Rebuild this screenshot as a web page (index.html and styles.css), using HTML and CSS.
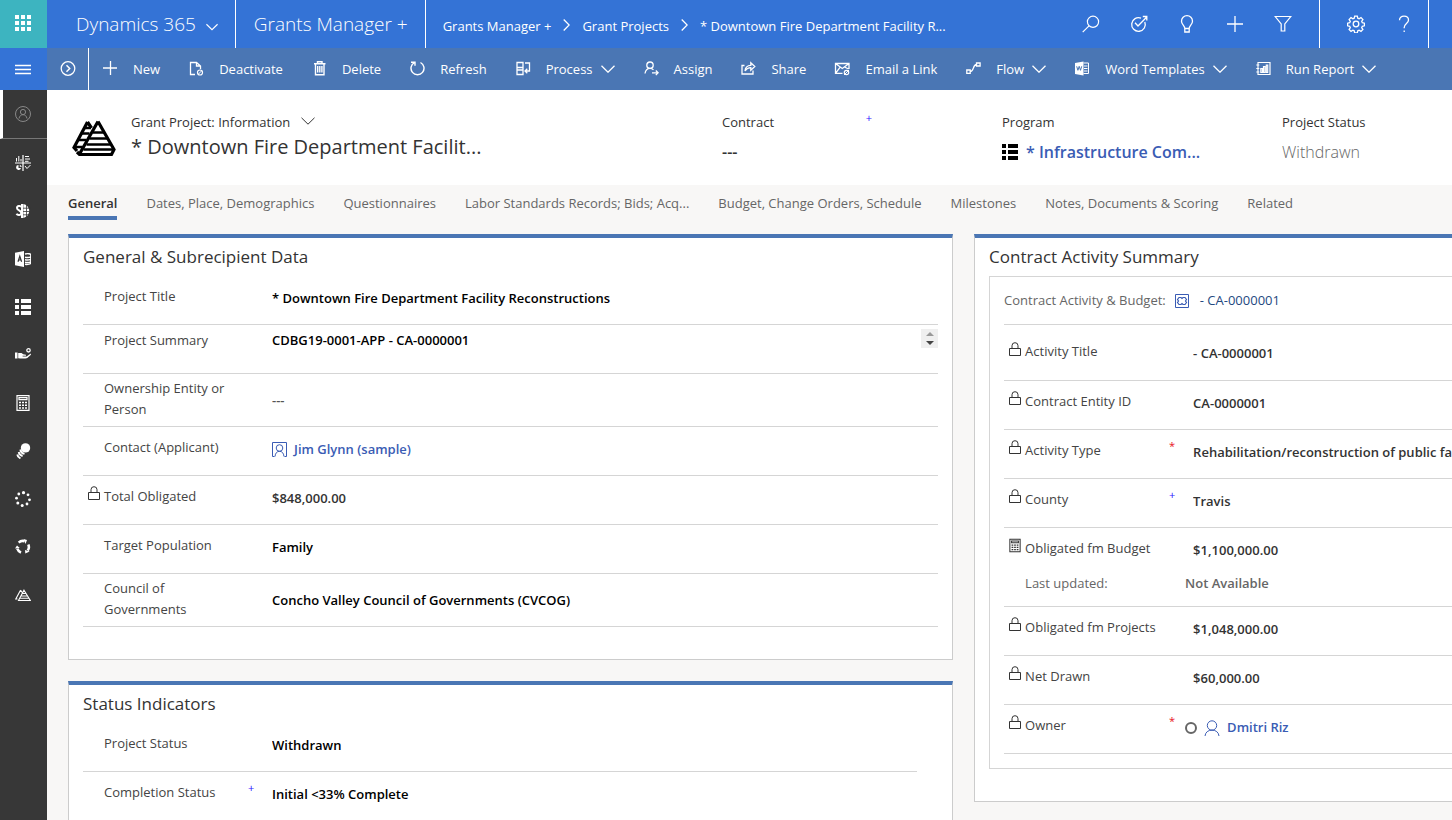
FILE: index.html
```html
<!DOCTYPE html>
<html lang="en">
<head>
<meta charset="utf-8">
<meta name="viewport" content="width=device-width, initial-scale=1">
<title>Grant Project: Downtown Fire Department Facility Reconstructions</title>
<link rel="stylesheet" href="styles.css">
</head>
<body>
<svg class="sprite" aria-hidden="true">
  <symbol id="i-waffle" viewBox="0 0 16 16"><path fill="currentColor" stroke="none" d="M0 0h4v4H0zM6 0h4v4H6zM12 0h4v4h-4zM0 6h4v4H0zM6 6h4v4H6zM12 6h4v4h-4zM0 12h4v4H0zM6 12h4v4H6zM12 12h4v4h-4z"/></symbol>
  <symbol id="i-chevron" viewBox="0 0 14 8"><path d="M.5.8 7 7.2 13.500.8"/></symbol>
  <symbol id="i-next" viewBox="0 0 7 12"><path d="M.7.5 6.200 6 .7 11.500"/></symbol>
  <symbol id="i-menu" viewBox="0 0 16 16"><path d="M0 4.500h16M0 8.500h16M0 12.500h16"/></symbol>
  <symbol id="i-expand" viewBox="0 0 16 16"><circle cx="8" cy="7.500" r="6.800" stroke-width="1.300"/><path d="m6.500 4.300 3.200 3.200-3.200 3.200" stroke-width="1.500"/></symbol>
  <symbol id="i-plus" viewBox="0 0 16 16"><path d="M8 0v16M0 8h16" stroke-width="1.300"/></symbol>
  <symbol id="i-cmdplus" viewBox="0 0 16 16"><path d="M8.500 0v14M1 7h14" stroke-width="1.300"/></symbol>
  <symbol id="i-deactivate" viewBox="0 0 16 16"><path d="M7 13.500H2.500v-12h6L12.500 5v3M8.500 1.500V5h4" stroke-width="1.300"/><circle cx="12" cy="11.500" r="2.500" stroke-width="1.200"/><path d="m10.300 13.200 3.400-3.400"/></symbol>
  <symbol id="i-trash" viewBox="0 0 16 16"><path d="M3 2.800h11.500M6.500 2.500V.8H11v1.700M4.500 3v10.800H13V3M6.700 5v6.500M8.800 5v6.500M10.900 5v6.500" stroke-width="1.400"/></symbol>
  <symbol id="i-refresh" viewBox="0 0 16 16"><path d="M5.500 1.500A6.500 6.500 0 1 0 11.500 1.500M2 1.200h4v3.600" stroke-width="1.400"/></symbol>
  <symbol id="i-process" viewBox="0 0 16 16"><path d="M2 1.500h6v5H2zM2 9h6v4.500H2zM2 6.500V9M8 6.500V9M10 2h4.500v8h-4.300M12.300 7.800 10 10l2.300 2.200" stroke-width="1.300"/></symbol>
  <symbol id="i-assign" viewBox="0 0 16 16"><circle cx="7" cy="4.200" r="3.200" stroke-width="1.300"/><path d="M2 12.500c.5-3.300 2.500-5.200 5-5.200 1.500 0 2.500.5 3.500 1.600M9 11.800h6M12.800 9.500l2.300 2.300-2.300 2.300" stroke-width="1.300"/></symbol>
  <symbol id="i-share" viewBox="0 0 16 16"><path d="M4.500 4.500H2v8.500h11V9.500M5 10c.3-3.500 2.200-5.500 5.800-5.600V1.700l4 3.800-4 3.800V6.700C8 6.700 6.500 7.700 5 10z" stroke-width="1.300"/></symbol>
  <symbol id="i-mail" viewBox="0 0 16 16"><path d="M8.500 12.300H1.500V2.500h13.500V8M1.500 2.500l6.800 5 6.700-5M1.500 12.300l4.500-6M14.500 8l-4-2" stroke-width="1.300"/><circle cx="12.500" cy="11.500" r="2.200" stroke-width="1.200"/><path d="m10 14 5-5"/></symbol>
  <symbol id="i-flow" viewBox="0 0 16 16"><path d="M1.800 9h3.400v3.400H1.800zM11.500 2h3.600v3h-3.600zM5.200 10.700c3.800 0 2.500-7.200 6.300-7.200" stroke-width="1.300"/></symbol>
  <symbol id="i-word" viewBox="0 0 16 16"><path fill="currentColor" stroke="none" d="M9.500.5v14L1 13V2z"/><path d="M9.500 2h5v10.500h-5M10 5h3.500M10 7.500h3.500M10 10h3.500"/><path d="m2.700 5.300 1.200 4 1.300-4 1.300 4 1.200-4" stroke="#4a76b4"/></symbol>
  <symbol id="i-report" viewBox="0 0 16 16"><path d="M3 1.500h12v12H3zM1.300 4h3M1.300 7.500h3M1.300 11h3M5.800 11.500V7.500h1.500v4zM8.500 11.500V5.500H10v6zM11.300 11.500V4h1.400v7.500z" stroke-width="1.200"/></symbol>
  <symbol id="i-search" viewBox="0 0 18 18"><circle cx="11" cy="6.800" r="5.600" stroke-width="1.200"/><path d="m7 10.800-6.300 6.300" stroke-width="1.200"/></symbol>
  <symbol id="i-target" viewBox="0 0 18 18"><path d="M14.800 7A6.800 6.800 0 1 1 11 3.200M5 7.800 8 11l8.500-8.700M12.800 1.500h4v4" stroke-width="1.300"/></symbol>
  <symbol id="i-bulb" viewBox="0 0 18 18"><path d="M6.800 13.500c0-2.800-3.300-4-3.300-7.300a5.500 5.500 0 0 1 11 0c0 3.300-3.300 4.500-3.300 7.300zM6.800 13.500V17h4.400v-3.500" stroke-width="1.300"/></symbol>
  <symbol id="i-filter" viewBox="0 0 18 18"><path d="M1.200 1.500h15.600L10.800 9v7H7.200V9z" stroke-width="1.200"/></symbol>
  <symbol id="i-gear" viewBox="0 0 18 18"><circle cx="9" cy="9" r="2.800" stroke-width="1.300"/><path stroke-width="1.300" d="m7.700 1.100 2.600 0 .5 2.100 1.300.6 1.900-1.200 1.900 1.900-1.200 1.900.6 1.300 2.100.5v2.600l-2.100.5-.6 1.300 1.200 1.900-1.900 1.900-1.900-1.200-1.300.6-.5 2.100H7.700l-.5-2.100-1.300-.6L4 16.400l-1.900-1.900 1.200-1.900-.6-1.300-2.100-.5V8.200l2.100-.5.6-1.300L2.100 4.500 4 2.600l1.900 1.200 1.300-.6z"/></symbol>
  <symbol id="i-help" viewBox="0 0 18 18"><path d="M4.500 5.200C4.500 2.700 6.300 1.200 9 1.200s4.500 1.500 4.500 3.900c0 3.300-4.300 3.600-4.300 7.400v.7M9.200 15.400V17" stroke-width="1.300"/></symbol>
  <symbol id="i-user" viewBox="0 0 16 16"><circle cx="8" cy="8" r="7.500"/><circle cx="8" cy="6" r="2.600"/><path d="M4 12.500c.5-2.500 2-3.800 4-3.800s3.500 1.300 4 3.800"/></symbol>
  <symbol id="i-dash" viewBox="0 0 16 16"><path d="M0 8h16M8 0v16" stroke-width="1.200"/><path d="M1.500 3v3.500M3.800 1v5.500M6 4v2.500M10 1.500h4M10 4h5M10 6.300h3.500M10 11l2 2.500L15.500 10"/><path fill="currentColor" stroke="none" d="M3.500 10a2.500 2.500 0 1 0 2.500 3H3.500zM4.800 9.500v2.300H7z"/></symbol>
  <symbol id="i-money" viewBox="0 0 16 16"><path d="M6.300 4.200C5.600 2.500 2 2.700 2 5c0 2.600 4.300 2.200 4.300 5 0 2.300-3.700 2.600-4.800.8M7 1v14" stroke-width="2"/><path fill="currentColor" stroke="none" d="M8.300 1a7.100 7.100 0 0 1 0 14z"/><path d="M8 5.200h8M8 8.500h8M8 11.800h7M11.500 1v14" stroke="#373737" stroke-width=".8"/></symbol>
  <symbol id="i-access" viewBox="0 0 16 16"><path fill="currentColor" stroke="none" d="M9 0v16L0 14.300V1.700z"/><path d="m3 10.800 1.800-5.600 1.800 5.600M3.500 9h2.600" stroke="#373737" stroke-width="1.200"/><path d="M10 3c3-.8 5.800 0 5.800.7v8.300c0 .8-2.800 1.800-5.800 1.300M10 6.300c3 .6 5.800 0 5.800-1M10 8.800c3 .6 5.800 0 5.800-1M10 11.300c3 .6 5.800 0 5.800-1" stroke-width="1.400"/></symbol>
  <symbol id="i-list" viewBox="0 0 16 16"><path fill="currentColor" stroke="none" d="M0 0h4v4H0zM6 0h10v4H6zM0 6h4v4H0zM6 6h10v4H6zM0 12h4v4H0zM6 12h10v4H6z"/></symbol>
  <symbol id="i-hand" viewBox="0 0 16 16"><path fill="currentColor" stroke="none" d="M0 5.500h2.500v6H0zM3.200 6h3.300l1.700 1.300 2.800.4v1H7.500l.2.700 4 .1L15 7c1-.4 1.300.2.700 1l-3.400 3c-1.500.6-5.500.6-9.100.3z"/><circle cx="13.500" cy="3.300" r="1.700" stroke-width="1.300"/></symbol>
  <symbol id="i-calc" viewBox="0 0 14 16"><path d="M1 .6h12v14.800H1zM3 2.700h8v2H3z" stroke-width="1.200"/><path d="M3 7.500h8M3 10.200h8M3 12.900h8" stroke-dasharray="2 1" stroke-width="1.500"/></symbol>
  <symbol id="i-coins" viewBox="0 0 16 16"><circle cx="10.500" cy="4.900" r="4.700" fill="currentColor" stroke="none"/><path d="M5.300 6.500c.4 2.200 1.900 3.900 4.200 4.400M3.700 9c.4 2 1.700 3.500 3.900 4M2.300 11.500c.3 1.800 1.500 3.200 3.200 3.800" stroke-width="1.900"/></symbol>
  <symbol id="i-dots" viewBox="0 0 16 16"><g fill="currentColor" stroke="none"><circle cx="8.500" cy="1.700" r="1.600"/><circle cx="13" cy="3.800" r="1.400"/><circle cx="14.500" cy="8.800" r="1.400"/><circle cx="12" cy="13" r="1.400"/><circle cx="7.200" cy="14.500" r="1.500"/><circle cx="2.800" cy="12" r="1.500"/><circle cx="1.500" cy="7.200" r="1.400"/><circle cx="3.800" cy="3" r="1.400"/></g></symbol>
  <symbol id="i-cycle" viewBox="0 0 16 16"><path d="M3.700 3.600A6 6 0 0 1 9.500 2.200M13.300 5.500c1 2.300.5 4.600-.6 6M6 13.600C4.200 12.800 2.900 11.500 2.300 9.700" stroke-width="2.600"/><path fill="currentColor" stroke="none" d="M8.500 0l3.500 1-1.500 4zM10 11l.3 3.600 4.400-2zM0 9.500l2-3L4.800 9z"/></symbol>
  <symbol id="i-peaks" viewBox="0 0 44 38"><path d="M26 2.500 42 30.500 39.500 35.500H7.500L5 33M15.500 3 2 28.500l3 3.500M15.500 3l4 6M26 2.500 7.500 35" stroke-width="3.200"/><path d="M12 9h7M9.500 14.500h8M21 13.500h11.500M17.500 19.500h18.500M14.500 25.500h24M11.500 30.500h29.500M6.500 21h7.500M4 28h6.500" stroke-width="2.300"/></symbol>
  <symbol id="i-peaks-small" viewBox="0 0 16 16"><path d="M9 3.200 15.300 13.500H3.500L9 3.200zM5.500 3.200.8 12h1.700M5.500 3.200l1.700 2.300M7.800 6.500h2.800M6.500 9h5.500M5 11.300h8.500" stroke-width="1.100"/></symbol>
  <symbol id="i-lock" viewBox="0 0 12 15"><path d="M.5 6.500h11v7H.5zM3 6.500V3.700a3 3 0 0 1 6 0v2.800"/></symbol>
  <symbol id="i-contact" viewBox="0 0 15 15"><path d="M.5 14.500V.5h14v14M.5 14.500h2M14.500 14.500h-2"/><circle cx="7.500" cy="6" r="3.300"/><path d="M3 14.500c.4-3.500 2-5.200 4.500-5.200s4.100 1.700 4.500 5.200"/></symbol>
  <symbol id="i-person" viewBox="0 0 16 16"><circle cx="8" cy="5.500" r="4.700"/><path d="M1 16c.4-3.800 3.200-5.900 7-5.900s6.600 2.100 7 5.900"/></symbol>
  <symbol id="i-ticket" viewBox="0 0 14 14"><path d="M.5.5h13v13H.5z"/><path d="M4 3.500h2l1 1 1-1h2l1.500 2-1 1.500 1 1.500-1.500 2H8l-1-1-1 1H4L2.500 8.500l1-1.500-1-1.500z" stroke-width="1.200"/></symbol>
</svg>

<div class="app">
  <header class="topbar">
    <button class="waffle" type="button" aria-label="App launcher"><svg class="icon i16"><use href="#i-waffle"/></svg></button>
    <button class="brand" type="button">Dynamics 365 <svg class="icon chev"><use href="#i-chevron"/></svg></button>
    <a class="area" href="#">Grants Manager +</a>
    <nav class="crumbs" aria-label="Breadcrumb">
      <a href="#">Grants Manager +</a>
      <svg class="icon next"><use href="#i-next"/></svg>
      <a href="#">Grant Projects</a>
      <svg class="icon next"><use href="#i-next"/></svg>
      <a href="#">* Downtown Fire Department Facility R...</a>
    </nav>
    <div class="tools">
      <button type="button" aria-label="Search"><svg class="icon i18"><use href="#i-search"/></svg></button>
      <button type="button" aria-label="Assistant"><svg class="icon i18"><use href="#i-target"/></svg></button>
      <button type="button" aria-label="Insights"><svg class="icon i18"><use href="#i-bulb"/></svg></button>
      <button type="button" aria-label="Create"><svg class="icon i16"><use href="#i-plus"/></svg></button>
      <button type="button" aria-label="Advanced find"><svg class="icon i18"><use href="#i-filter"/></svg></button>
    </div>
    <div class="tools tools-settings">
      <button type="button" aria-label="Settings"><svg class="icon i18"><use href="#i-gear"/></svg></button>
      <button type="button" aria-label="Help"><svg class="icon i18"><use href="#i-help"/></svg></button>
    </div>
  </header>

  <div class="commandbar">
    <button class="menu" type="button" aria-label="Site map"><svg class="icon i16"><use href="#i-menu"/></svg></button>
    <button class="expand" type="button" aria-label="Open record set"><svg class="icon i16"><use href="#i-expand"/></svg></button>
    <div class="commands">
      <button type="button"><svg class="icon i16"><use href="#i-cmdplus"/></svg>New</button>
      <button type="button"><svg class="icon i16"><use href="#i-deactivate"/></svg>Deactivate</button>
      <button type="button"><svg class="icon i16"><use href="#i-trash"/></svg>Delete</button>
      <button type="button"><svg class="icon i16"><use href="#i-refresh"/></svg>Refresh</button>
      <button type="button"><svg class="icon i16"><use href="#i-process"/></svg>Process<svg class="icon chev"><use href="#i-chevron"/></svg></button>
      <button type="button"><svg class="icon i16"><use href="#i-assign"/></svg>Assign</button>
      <button type="button"><svg class="icon i16"><use href="#i-share"/></svg>Share</button>
      <button type="button"><svg class="icon i16"><use href="#i-mail"/></svg>Email a Link</button>
      <button type="button"><svg class="icon i16"><use href="#i-flow"/></svg>Flow<svg class="icon chev"><use href="#i-chevron"/></svg></button>
      <button type="button"><svg class="icon i16"><use href="#i-word"/></svg>Word Templates<svg class="icon chev"><use href="#i-chevron"/></svg></button>
      <button type="button"><svg class="icon i16"><use href="#i-report"/></svg>Run Report<svg class="icon chev"><use href="#i-chevron"/></svg></button>
    </div>
  </div>

  <div class="body">
    <nav class="rail" aria-label="Site map">
      <button class="active" type="button" aria-label="Me"><svg class="icon i16"><use href="#i-user"/></svg></button>
      <button type="button" aria-label="Dashboards"><svg class="icon i16"><use href="#i-dash"/></svg></button>
      <button type="button" aria-label="Funding"><svg class="icon i16"><use href="#i-money"/></svg></button>
      <button type="button" aria-label="Applications"><svg class="icon i16"><use href="#i-access"/></svg></button>
      <button type="button" aria-label="Programs"><svg class="icon i16"><use href="#i-list"/></svg></button>
      <button type="button" aria-label="Payments"><svg class="icon i16"><use href="#i-hand"/></svg></button>
      <button type="button" aria-label="Budgets"><svg class="icon i16"><use href="#i-calc"/></svg></button>
      <button type="button" aria-label="Draws"><svg class="icon i16"><use href="#i-coins"/></svg></button>
      <button type="button" aria-label="Milestones"><svg class="icon i16"><use href="#i-dots"/></svg></button>
      <button type="button" aria-label="Change orders"><svg class="icon i16"><use href="#i-cycle"/></svg></button>
      <button type="button" aria-label="Projects"><svg class="icon i16"><use href="#i-peaks-small"/></svg></button>
    </nav>

    <main class="page">
      <section class="record">
        <div class="identity">
          <svg class="icon peaks"><use href="#i-peaks"/></svg>
          <div class="titles">
            <button class="form-switch" type="button">Grant Project: Information <svg class="icon chev"><use href="#i-chevron"/></svg></button>
            <h1>* Downtown Fire Department Facilit...</h1>
          </div>
        </div>
        <div class="fact"><span class="fact-label">Contract<i class="mark plus">+</i></span><span class="fact-value dark">---</span></div>
        <div class="fact"><span class="fact-label">Program</span><a class="fact-value link" href="#"><svg class="icon i16 black"><use href="#i-list"/></svg>* Infrastructure Com...</a></div>
        <div class="fact"><span class="fact-label">Project Status</span><span class="fact-value">Withdrawn</span></div>
      </section>

      <nav class="tabs" role="tablist">
        <button class="selected" role="tab" aria-selected="true" type="button">General</button>
        <button role="tab" type="button">Dates, Place, Demographics</button>
        <button role="tab" type="button">Questionnaires</button>
        <button role="tab" type="button">Labor Standards Records; Bids; Acq...</button>
        <button role="tab" type="button">Budget, Change Orders, Schedule</button>
        <button role="tab" type="button">Milestones</button>
        <button role="tab" type="button">Notes, Documents &amp; Scoring</button>
        <button role="tab" type="button">Related</button>
      </nav>

      <div class="columns">
        <div class="column">
          <section class="card">
            <h2>General &amp; Subrecipient Data</h2>
            <div class="row"><span class="label">Project Title</span><span class="value">* Downtown Fire Department Facility Reconstructions</span></div>
            <div class="row memo"><label class="label" for="summary">Project Summary</label><textarea class="value" id="summary" rows="1" readonly>CDBG19-0001-APP - CA-0000001</textarea>
              <div class="scroller"><button type="button" aria-label="Scroll up" class="up"></button><button type="button" aria-label="Scroll down" class="down"></button></div></div>
            <div class="row double"><span class="label">Ownership Entity or Person</span><span class="value muted">---</span></div>
            <div class="row"><span class="label">Contact (Applicant)</span><a class="value link" href="#"><svg class="icon i15"><use href="#i-contact"/></svg>Jim Glynn (sample)</a></div>
            <div class="row"><svg class="icon lock"><use href="#i-lock"/></svg><span class="label">Total Obligated</span><span class="value locked">$848,000.00</span></div>
            <div class="row"><span class="label">Target Population</span><span class="value">Family</span></div>
            <div class="row double"><span class="label">Council of Governments</span><span class="value">Concho Valley Council of Governments (CVCOG)</span></div>
          </section>
          <section class="card narrow">
            <h2>Status Indicators</h2>
            <div class="row"><span class="label">Project Status</span><span class="value">Withdrawn</span></div>
            <div class="row"><span class="label">Completion Status</span><i class="mark plus">+</i><span class="value">Initial &lt;33% Complete</span></div>
          </section>
        </div>

        <section class="card summary">
          <h2>Contract Activity Summary</h2>
          <div class="panel">
            <div class="lookup"><span>Contract Activity &amp; Budget:</span><svg class="icon i14"><use href="#i-ticket"/></svg><a href="#">- CA-0000001</a></div>
            <div class="row tall"><svg class="icon lock"><use href="#i-lock"/></svg><span class="label">Activity Title</span><span class="value locked">- CA-0000001</span></div>
            <div class="row"><svg class="icon lock"><use href="#i-lock"/></svg><span class="label">Contract Entity ID</span><span class="value locked">CA-0000001</span></div>
            <div class="row"><svg class="icon lock"><use href="#i-lock"/></svg><span class="label">Activity Type</span><i class="mark req">*</i><span class="value locked">Rehabilitation/reconstruction of public facilities</span></div>
            <div class="row"><svg class="icon lock"><use href="#i-lock"/></svg><span class="label">County</span><i class="mark plus">+</i><span class="value locked">Travis</span></div>
            <div class="row rollup"><svg class="icon lock"><use href="#i-calc"/></svg><span class="label">Obligated fm Budget</span><span class="value locked">$1,100,000.00</span><span class="label updated">Last updated:</span><span class="value stamp">Not Available</span></div>
            <div class="row"><svg class="icon lock"><use href="#i-lock"/></svg><span class="label">Obligated fm Projects</span><span class="value locked">$1,048,000.00</span></div>
            <div class="row"><svg class="icon lock"><use href="#i-lock"/></svg><span class="label">Net Drawn</span><span class="value locked">$60,000.00</span></div>
            <div class="row"><svg class="icon lock"><use href="#i-lock"/></svg><span class="label">Owner</span><i class="mark req">*</i><a class="value link owner" href="#"><span class="presence"></span><svg class="icon i16"><use href="#i-person"/></svg>Dmitri Riz</a></div>
          </div>
        </section>
      </div>
    </main>
  </div>
</div>
</body>
</html>
```
FILE: styles.css
```css
* { box-sizing: border-box; }

body {
  margin: 0;
  background: #f8f7f6;
  color: #333;
  font: 13px/21px "Open Sans", "Noto Sans", sans-serif;
}

button, textarea { margin: 0; padding: 0; border: 0; background: none; color: inherit; font: inherit; }
button { cursor: pointer; white-space: nowrap; }
a { color: inherit; text-decoration: none; }
h1, h2 { margin: 0; font-weight: 400; }

.sprite { position: absolute; width: 0; height: 0; }
.icon { flex: none; fill: none; stroke: currentColor; stroke-width: 1; }
.i14 { width: 14px; height: 14px; }
.i15 { width: 15px; height: 15px; }
.i16 { width: 16px; height: 16px; }
.i18 { width: 18px; height: 18px; }
.chev { width: 14px; height: 8px; }
.next { width: 7px; height: 12px; }
.black { color: #000; }

.app { display: flex; flex-direction: column; height: 100vh; overflow: hidden; }

/* Top bar */
.topbar { display: flex; flex: none; height: 48px; background: #3473d6; color: #fff; }
.topbar .chev, .topbar .next, .commandbar .chev, .menu .icon { stroke-width: 1.3; }
.waffle, .menu, .expand, .tools button, .rail button { display: flex; align-items: center; justify-content: center; }
.waffle { width: 47px; padding: 0 1px 2px 0; background: #3db4c0; }
.brand { display: flex; align-items: center; gap: 10px; padding: 0 17px 0 29px; border-right: 1px solid #fff; font-size: 19px; font-weight: 300; }
.brand .chev { width: 12px; margin-top: 6px; }
.area { display: flex; align-items: center; padding: 0 17px 0 18px; border-right: 1px solid #fff; font-size: 19px; font-weight: 300; white-space: nowrap; }
.crumbs { display: flex; flex: 1; align-items: center; gap: 12px; min-width: 0; padding: 4px 0 0 17px; white-space: nowrap; }
.crumbs .next { margin-top: -2px; }
.tools { display: flex; align-items: center; padding-right: 12px; }
.tools button { width: 48px; height: 46px; }
.tools-settings { margin-right: 23px; padding-left: 12px; padding-right: 0; border: solid #fff; border-width: 0 1px; }

/* Command bar */
.commandbar { display: flex; flex: none; height: 42px; background: #4a76b4; color: #fff; }
.menu { width: 47px; padding-right: 1px; background: #3473d6; }
.expand { width: 42px; border-right: 1px solid #fff; }
.commands { display: flex; gap: 28px; padding-left: 13px; }
.commands button { display: flex; align-items: center; gap: 15px; }
.commands .chev { margin-left: -7px; }

.body { display: flex; flex: 1; min-height: 0; }

/* Navigation rail */
.rail { flex: none; width: 47px; background: #373737; color: #fff; }
.rail button { width: 100%; height: 48px; padding-right: 1px; }
.rail .active { height: 49px; border-left: 3px solid #fff; border-bottom: 1px solid #777; padding-right: 4px; color: #888; }

.page { flex: 1; min-width: 0; overflow: hidden; }

/* Record header */
.record { display: grid; grid-template-columns: 1fr 280px 280px 170px; height: 95px; background: #fff; }
.identity { display: flex; gap: 15px; padding: 22px 0 0 25px; }
.peaks { width: 44px; height: 38px; margin-top: 7px; color: #000; }
.form-switch { display: flex; align-items: center; gap: 11px; }
.form-switch .chev { margin-top: -4px; }
.titles h1 { font-size: 20px; line-height: 28px; white-space: nowrap; }
.fact { display: flex; flex-direction: column; gap: 6px; padding-top: 22px; }
.fact-label { display: flex; justify-content: space-between; width: 150px; }
.fact-value { display: flex; align-items: center; gap: 8px; color: #666; font-size: 16px; font-weight: 300; line-height: 26px; white-space: nowrap; }
.fact-value.dark { color: #333; font-weight: 600; }
.fact-value.link, .link { color: #3a5cb4; font-weight: 600; }

.mark { font-style: normal; font-size: 11px; line-height: 12px; }
.plus { color: #2a10ff; }
.req { color: #e81123; }

/* Tabs */
.tabs { display: flex; gap: 29px; height: 49px; padding: 8px 0 14px 21px; color: #666; }
.tabs button { display: flex; border-bottom: 4px solid transparent; }
.tabs .selected { border-color: #4a76b4; color: #333; font-weight: 600; }

/* Form sections */
.columns { display: grid; grid-template-columns: repeat(2, 64%); align-items: start; gap: 21px; padding: 0 1px 0 21px; }
.column { display: grid; gap: 21px; }
.card { padding: 0 14px 32px; border: 1px solid #ccc; border-top: 4px solid #4a76b4; background: #fff; }
.card h2 { font-size: 17px; line-height: 38px; }
.narrow { padding-right: 35px; }

.row { display: grid; position: relative; grid-template-columns: 144px 24px 1fr; align-items: start; min-height: 49px; padding: 10px 0 3px 21px; border-bottom: 1px solid #d5d5d5; }
.row .label { grid-column: 1; grid-row: 1; padding-right: 14px; color: #444; }
.row .mark { grid-column: 2; grid-row: 1; }
.row .value { display: flex; grid-column: 3; grid-row: 1; align-items: center; gap: 7px; margin-top: 2px; color: #000; font-weight: 600; white-space: nowrap; overflow: hidden; }
.row .locked { color: #333; }
.row .muted { color: #555; }
.row .link { color: #3a5cb4; }
.row .lock { position: absolute; left: 5px; top: 10px; width: 12px; height: 15px; color: #333; }
.double { padding: 4px 0 6px 21px; }
.double .value { margin-top: 12px; }
.memo { padding-top: 5px; }
.memo .value { display: block; width: 100%; height: 21px; margin-top: 0; resize: none; }
.scroller { display: grid; position: absolute; top: 4px; right: 0; width: 17px; height: 19px; background: #efefef; }
.scroller button { justify-self: center; align-self: center; width: 0; height: 0; border: 4px solid transparent; }
.scroller .up { border-top: 0; border-bottom-color: #999; }
.scroller .down { border-bottom: 0; border-top-color: #444; }

.panel { padding: 0 14px 14px; border: 1px solid #d5d5d5; }
.lookup { display: flex; align-items: center; gap: 9px; height: 48px; border-bottom: 1px solid #d5d5d5; color: #666; }
.lookup .icon { color: #3a5cb4; }
.lookup a { margin-left: 2px; color: #24497f; }
.summary .label { padding-right: 0; white-space: nowrap; }
.tall { min-height: 56px; padding-top: 16px; }
.row.tall .lock { top: 17px; }
.rollup { align-content: start; min-height: 79px; row-gap: 12px; }
.row .updated { grid-row: 2; color: #666; }
.row .stamp { grid-row: 2; margin: 0 0 0 -8px; color: #666; }
.row .owner { margin-left: -8px; }
.presence { width: 12px; height: 12px; border: 2px solid #666; border-radius: 50%; }
```
